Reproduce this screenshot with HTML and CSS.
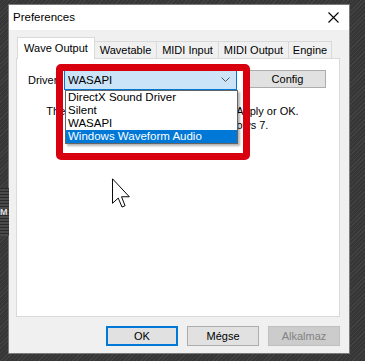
FILE: index.html
```html
<!DOCTYPE html>
<html>
<head>
<meta charset="utf-8">
<link rel="stylesheet" href="styles.css">
</head>
<body>
<div class="desk">
  <div class="side-m"><span>M</span></div>
  <div class="window">
    <div class="titlebar">
      <span class="title">Preferences</span>
      <svg class="close" width="11" height="11" viewBox="0 0 11 11"><path d="M0.5 0.5 L10.5 10.5 M10.5 0.5 L0.5 10.5" stroke="#000" stroke-width="1.1" fill="none"/></svg>
    </div>
    <div class="client">
      <div class="tabs">
        <div class="tab active">Wave Output</div>
        <div class="tab">Wavetable</div>
        <div class="tab">MIDI Input</div>
        <div class="tab">MIDI Output</div>
        <div class="tab">Engine</div>
      </div>
      <div class="panel">
        <div class="row">
          <span class="label">Driver:</span>
          <div class="combo"><span>WASAPI</span>
            <svg class="chev" width="9" height="5" viewBox="0 0 9 5"><path d="M0.5 0.5 L4.5 4.5 L8.5 0.5" stroke="#555" stroke-width="1" fill="none"/></svg>
          </div>
          <div class="btn config">Config</div>
        </div>
        <p class="info">The change takes effect after you click Apply or OK.<br>Requires Windows Vista or Windows 7.</p>
        <div class="droplist">
          <div class="item">DirectX Sound Driver</div>
          <div class="item">Silent</div>
          <div class="item">WASAPI</div>
          <div class="item sel">Windows Waveform Audio</div>
        </div>
        <div class="redbox"></div>
      </div>
      <div class="buttons">
        <div class="btn dlg default">OK</div>
        <div class="btn dlg">Mégse</div>
        <div class="btn dlg disabled">Alkalmaz</div>
      </div>
    </div>
  </div>
  <svg class="cursor" width="21" height="31" viewBox="0 0 12 19"><path d="M0.5 0.5 L0.5 15.5 L4 12.3 L6.3 17.8 L8.2 17 L6 11.5 L10.8 11.5 Z" fill="#fff" stroke="#000" stroke-width="0.6" stroke-linejoin="miter"/></svg>
</div>
</body>
</html>
```
FILE: styles.css
```css
* { box-sizing: border-box; }
html, body { margin: 0; padding: 0; }
body {
  font-family: "Liberation Sans", Arial, sans-serif;
  font-size: 11px;
  color: #000;
}
.desk {
  position: relative;
  width: 365px;
  height: 361px;
  overflow: hidden;
  background-color: #3a3a3a;
  background-image: repeating-linear-gradient(135deg, #424242 0px, #424242 1px, #363636 1px, #363636 3px);
  padding: 4px 15px 7px 8px;
}
.side-m {
  position: absolute;
  left: 0;
  top: 188px;
  width: 9px;
  height: 48px;
  background: repeating-linear-gradient(180deg, #2a2a2a 0, #2a2a2a 1px, #4a4a4a 1px, #4a4a4a 3px);
  overflow: hidden;
}
.side-m span {
  position: absolute;
  left: 0;
  top: 19px;
  color: #ddd;
  font-weight: bold;
  font-size: 9px;
}
.window {
  width: 342px;
  height: 350px;
  border: 1px solid #7a7a7a;
  background: #f0f0f0;
  display: flex;
  flex-direction: column;
}
.titlebar {
  height: 25px;
  background: #fff;
  display: flex;
  align-items: center;
  justify-content: space-between;
  padding: 0 10px 0 4px;
  flex: none;
}
.title { font-size: 11.5px; margin-top: -1px; }
.client {
  padding: 7px 9px 0 7px;
  display: flex;
  flex-direction: column;
}
.tabs {
  display: flex;
  align-items: flex-end;
  padding-left: 1px;
  height: 21px;
  position: relative;
  z-index: 2;
}
.tab {
  flex: none;
  height: 17px;
  padding: 0;
  white-space: nowrap;
  border: 1px solid #d9d9d9;
  border-bottom: none;
  border-left: none;
  background: #f0f0f0;
  display: flex;
  align-items: center;
  justify-content: center;
}
.tab:nth-child(2) { width: 62px; }
.tab:nth-child(3) { width: 62px; }
.tab:nth-child(4) { width: 70px; }
.tab:nth-child(5) { width: 43px; }
.tab.active {
  height: 22px;
  width: 78px;
  border-left: 1px solid #d9d9d9;
  background: #fff;
  margin-bottom: -1px;
  padding-bottom: 2px;
}
.panel {
  position: relative;
  height: 259px;
  background: #fff;
  border: 1px solid #d9d9d9;
  padding: 10px 0 0 11px;
}
.row {
  display: flex;
  align-items: center;
}
.label { width: 36px; }
.combo {
  width: 173px;
  height: 21px;
  border: 1px solid #0078d7;
  background: #cce4f7;
  display: flex;
  align-items: center;
  justify-content: space-between;
  padding: 0 6px 0 3px;
  font-size: 11.5px;
}
.btn {
  display: flex;
  align-items: center;
  justify-content: center;
  background: #e1e1e1;
  border: 1px solid #adadad;
}
.config {
  width: 77px;
  height: 18px;
  margin-left: 12px;
  margin-top: -2px;
}
.info {
  margin: 14px 0 0 -11px;
  padding-right: 11px;
  text-align: center;
  line-height: 14px;
  white-space: nowrap;
}
.droplist {
  position: absolute;
  left: 48px;
  top: 31px;
  width: 173px;
  height: 54px;
  background: #fff;
  border: 1px solid #646464;
  box-shadow: 2px 2px 2px rgba(0,0,0,0.3);
}
.item {
  height: 13px;
  line-height: 13px;
  padding-left: 2px;
  font-size: 11.5px;
}
.item.sel {
  background: #0078d7;
  color: #fff;
}
.redbox {
  position: absolute;
  left: 39px;
  top: 5px;
  width: 194px;
  height: 96px;
  border: 7px solid #d8000f;
  border-radius: 5px;
}
.buttons {
  display: flex;
  justify-content: flex-end;
  gap: 9px;
  padding-top: 9px;
}
.dlg {
  width: 72px;
  height: 20px;
}
.dlg.default {
  border: 2px solid #0078d7;
}
.dlg.disabled {
  background: #cccccc;
  border-color: #bfbfbf;
  color: #838383;
}
.cursor {
  position: absolute;
  left: 111px;
  top: 178px;
}
```
